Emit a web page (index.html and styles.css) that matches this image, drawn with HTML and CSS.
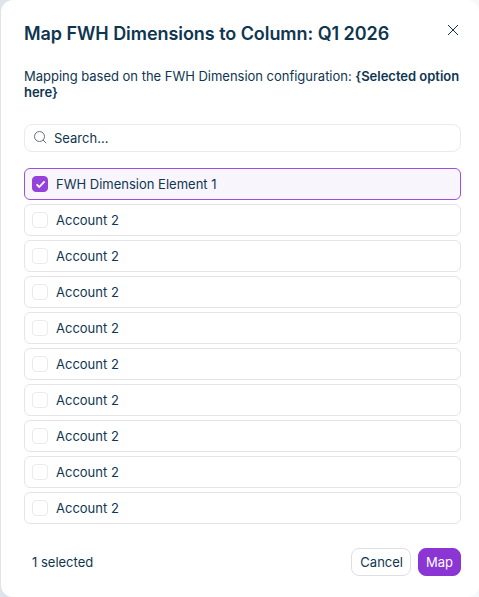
FILE: index.html
```html
<!DOCTYPE html>
<html lang="en">
<head>
<meta charset="utf-8">
<title>Map FWH Dimensions</title>
<link rel="stylesheet" href="styles.css">
</head>
<body>
<main class="modal">
  <header class="head">
    <h1 class="title">Map FWH Dimensions to Column: Q1 2026</h1>
    <button class="close" aria-label="Close">
      <svg width="12" height="12" viewBox="0 0 12 12"><path d="M1 1l10 10M11 1L1 11" fill="none" stroke="#0f3650" stroke-width="1"/></svg>
    </button>
  </header>
  <p class="desc">Mapping based on the FWH Dimension configuration: <strong>{Selected option here}</strong></p>
  <div class="search">
    <svg width="16" height="16" viewBox="0 0 16 16"><circle cx="6.5" cy="6.5" r="5" fill="none" stroke="#5b7385" stroke-width="1"/><path d="M10 10l3.2 3.2" fill="none" stroke="#5b7385" stroke-width="1"/></svg>
    <span>Search...</span>
  </div>
  <ul class="list">
    <li class="row selected"><span class="check"><svg width="12" height="12" viewBox="0 0 12 12"><path d="M2.6 6.4l2.6 2.6 5.4-5.6" fill="none" stroke="#fff" stroke-width="1.8"/></svg></span>FWH Dimension Element 1</li>
    <li class="row"><span class="check"></span>Account 2</li>
    <li class="row"><span class="check"></span>Account 2</li>
    <li class="row"><span class="check"></span>Account 2</li>
    <li class="row"><span class="check"></span>Account 2</li>
    <li class="row"><span class="check"></span>Account 2</li>
    <li class="row"><span class="check"></span>Account 2</li>
    <li class="row"><span class="check"></span>Account 2</li>
    <li class="row"><span class="check"></span>Account 2</li>
    <li class="row"><span class="check"></span>Account 2</li>
  </ul>
  <footer class="foot">
    <span class="count">1 selected</span>
    <div class="actions">
      <button class="btn ghost">Cancel</button>
      <button class="btn primary">Map</button>
    </div>
  </footer>
</main>
</body>
</html>
```
FILE: styles.css
```css
* { box-sizing: border-box; }
html, body { margin: 0; height: 100%; }
body {
  background: linear-gradient(90deg, #dfe4ec 0, #dfe4ec 50%, #f7f8fa 100%);
  font-family: Inter, "Liberation Sans", sans-serif;
  color: #0f3650;
  overflow: hidden;
}
.modal {
  width: 478px;
  height: 597px;
  margin-left: 1px;
  padding: 24px 18px 21px 23px;
  background: #fff;
  border-radius: 12px;
  display: flex;
  flex-direction: column;
}
.head { display: flex; justify-content: space-between; align-items: flex-start; height: 20px; }
.title { margin: 0; font-size: 18px; line-height: 20px; font-weight: 600; letter-spacing: -0.055px; }
.close {
  margin: 0 2px 0 0;
  padding: 0;
  border: 0;
  background: none;
  width: 12px;
  height: 12px;
  display: flex;
  align-items: center;
  justify-content: center;
}
.desc { margin: 24px 0 0; font-size: 13px; line-height: 16px; letter-spacing: -0.02px; }
.desc strong { font-weight: 600; }
.search {
  margin-top: 24px;
  height: 28px;
  border: 1px solid #e9ebef;
  border-radius: 8px;
  display: flex;
  align-items: center;
  gap: 5px;
  padding: 0 8px;
  font-size: 13px;
}
.list { list-style: none; margin: 16px 0 0; padding: 0; display: flex; flex-direction: column; gap: 4px; }
.row {
  height: 32px;
  border: 1px solid #e3e5e9;
  border-radius: 6px;
  display: flex;
  align-items: center;
  gap: 8px;
  padding: 0 7px;
  font-size: 13px;
}
.row.selected { border-color: #9b51e0; background: #f8f5fd; }
.check {
  width: 16px;
  height: 16px;
  border: 1px solid #e9ebef;
  border-radius: 4px;
  background: #fff;
  display: flex;
  align-items: center;
  justify-content: center;
}
.selected .check { background: #9442da; border-color: #9442da; }
.foot { margin-top: auto; display: flex; justify-content: space-between; align-items: center; }
.count { font-size: 13px; margin-left: 8px; }
.actions { display: flex; gap: 7px; }
.btn {
  height: 28px;
  border-radius: 8px;
  font-family: inherit;
  font-size: 13px;
  padding: 0 7px;
}
.ghost { background: #fff; border: 1px solid #dcdfe6; color: #0f3650; padding: 0 7px 0 8px; }
.primary { background: #8a35d4; border: 1px solid #8a35d4; color: #fff; }
```
